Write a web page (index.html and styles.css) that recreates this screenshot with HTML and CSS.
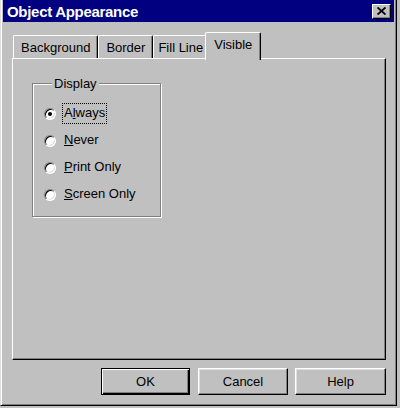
FILE: index.html
```html
<!DOCTYPE html>
<html lang="en">

<head>
    <meta charset="UTF-8">
    <meta name="viewport" content="width=device-width, initial-scale=1.0">
    <title>Object Appearance</title>
    <link rel="stylesheet" href="styles.css">
</head>

<body>

    <div class="window">
        <div class="titlebar">
            <span class="title">Object Appearance</span>
            <span class="close-button">
                <svg width="9" height="8" viewBox="0 0 9 8">
                    <path d="M0.5 0.5 L8.5 7.5 M8.5 0.5 L0.5 7.5" stroke="#000" stroke-width="1.8" fill="none" />
                </svg>
            </span>
        </div>

        <div class="tabs">
            <div class="tab">Background</div>
            <div class="tab">Border</div>
            <div class="tab tab-narrow">Fill Line</div>
            <div class="tab active">Visible</div>
        </div>

        <div class="panel">
            <fieldset class="group">
                <legend>Display</legend>
                <div class="option">
                    <span class="radio checked"></span>
                    <span class="label focused">A<u>l</u>ways</span>
                </div>
                <div class="option">
                    <span class="radio"></span>
                    <span class="label"><u>N</u>ever</span>
                </div>
                <div class="option">
                    <span class="radio"></span>
                    <span class="label"><u>P</u>rint Only</span>
                </div>
                <div class="option">
                    <span class="radio"></span>
                    <span class="label"><u>S</u>creen Only</span>
                </div>
            </fieldset>
        </div>

        <div class="buttons">
            <div class="button default">OK</div>
            <div class="button">Cancel</div>
            <div class="button help">Help</div>
        </div>
    </div>

</body>

</html>
```

FILE: styles.css
```css
body {
    margin: 0;
    background-color: #c0c0c0;
    font-family: 'Liberation Sans', Arial, sans-serif;
    font-size: 13px;
    color: #000;
}

.window {
    box-sizing: border-box;
    width: 397px;
    height: 406px;
    padding: 0 2px 2px 2px;
    background-color: #c0c0c0;
    border-left: 1px solid #dfdfdf;
    border-right: 1px solid #000;
    border-bottom: 1px solid #000;
    box-shadow: inset 1px 0 #fff, inset -1px -1px #808080;
}

.titlebar {
    display: flex;
    align-items: center;
    justify-content: space-between;
    height: 22px;
    padding: 0 3px 0 4px;
    background-color: #000080;
}

.title {
    color: #fff;
    font-weight: bold;
    font-size: 15px;
    letter-spacing: -0.3px;
}

.close-button {
    box-sizing: border-box;
    display: flex;
    align-items: center;
    justify-content: center;
    width: 19px;
    height: 15px;
    background-color: #c0c0c0;
    border: 1px solid;
    border-color: #fff #000 #000 #fff;
    box-shadow: inset -1px -1px #808080;
}

.tabs {
    display: flex;
    align-items: flex-end;
    margin: 10px 8px 0 9px;
    padding-left: 1px;
}

.tab {
    box-sizing: border-box;
    height: 23px;
    padding: 4px 7px 0 7px;
    border-top: 1px solid #fff;
    border-left: 1px solid #fff;
    border-right: 1px solid #000;
    border-radius: 2px 2px 0 0;
    box-shadow: inset -1px 0 #808080;
    background-color: #c0c0c0;
}

.tab-narrow {
    padding-left: 4px;
    padding-right: 3px;
}

.active {
    position: relative;
    z-index: 1;
    height: 28px;
    margin: 0 -2px -2px -2px;
    padding: 4px 8px 0 8px;
}

.panel {
    box-sizing: border-box;
    height: 302px;
    margin: 0 8px 0 9px;
    padding: 0 0 0 19px;
    overflow: hidden;
    border: 1px solid;
    border-color: #fff #000 #000 #fff;
    box-shadow: inset -1px -1px #808080;
}

.group {
    box-sizing: border-box;
    width: 129px;
    margin: 17px 0 0 0;
    padding: 9px 0 8px 11px;
    border: 1px solid #808080;
    box-shadow: inset 1px 1px #fff, 1px 1px #fff;
}

.group legend {
    margin-left: 8px;
    padding: 0 2px;
    background-color: #c0c0c0;
    line-height: 15px;
}

.option {
    display: flex;
    align-items: center;
    gap: 6px;
    height: 27px;
}

.radio {
    box-sizing: border-box;
    display: flex;
    align-items: center;
    justify-content: center;
    width: 12px;
    height: 12px;
    border-radius: 50%;
    background-color: #fff;
    border: 1px solid;
    border-color: #808080 #fff #fff #808080;
    box-shadow: inset 1px 1px #000, inset -1px -1px #dfdfdf;
}

.checked::after {
    content: "";
    width: 4px;
    height: 4px;
    border-radius: 50%;
    background-color: #000;
}

.label {
    padding: 1px 1px 2px 1px;
    line-height: 16px;
    border: 1px solid transparent;
}

.focused {
    border: 1px dotted #000;
}

.buttons {
    display: flex;
    justify-content: flex-end;
    gap: 7px;
    margin-top: 8px;
    padding-right: 8px;
}

.button {
    box-sizing: border-box;
    display: flex;
    align-items: center;
    justify-content: center;
    width: 90px;
    height: 27px;
    border: 1px solid;
    border-color: #fff #000 #000 #fff;
    box-shadow: inset -1px -1px #808080, inset 1px 1px #dfdfdf;
}

.default {
    width: 89px;
    margin-right: 1px;
    border-color: #000;
    box-shadow: inset 1px 1px #fff, inset -1px -1px #000, inset -2px -2px #808080;
}

.help {
    width: 91px;
}
```
